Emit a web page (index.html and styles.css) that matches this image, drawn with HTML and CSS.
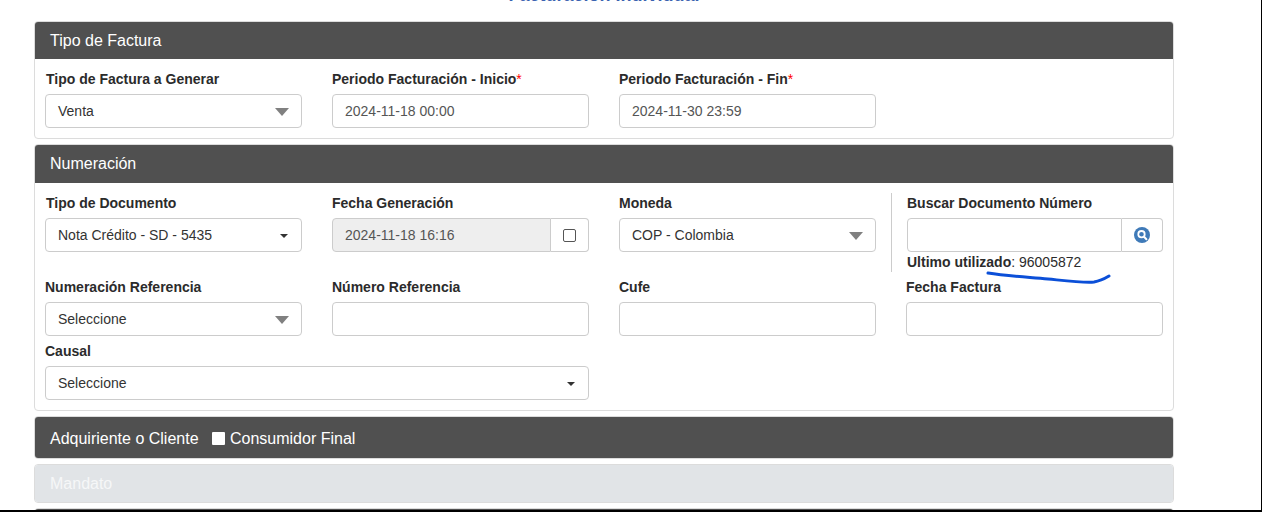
FILE: index.html
```html
<!DOCTYPE html>
<html lang="es">

<head>
    <meta charset="UTF-8">
    <meta name="viewport" content="width=device-width, initial-scale=1.0">
    <title>Facturación Individual</title>
    <link rel="stylesheet" href="styles.css">
</head>

<body>
    <div class="page">
        <h1 class="page-title">Facturación Individual</h1>

        <section class="card">
            <h2 class="card-head">Tipo de Factura</h2>
            <div class="card-body">
                <div class="field field-first">
                    <label>Tipo de Factura a Generar</label>
                    <div class="control select-fat">Venta</div>
                </div>
                <div class="field">
                    <label>Periodo Facturación - Inicio<span class="req">*</span></label>
                    <div class="control muted">2024-11-18 00:00</div>
                </div>
                <div class="field">
                    <label>Periodo Facturación - Fin<span class="req">*</span></label>
                    <div class="control muted">2024-11-30 23:59</div>
                </div>
            </div>
        </section>

        <section class="card">
            <h2 class="card-head head-tall">Numeración</h2>
            <div class="card-body numeracion">
                <div class="field field-first">
                    <label>Tipo de Documento</label>
                    <div class="control select-thin">Nota Crédito - SD - 5435</div>
                </div>
                <div class="field">
                    <label>Fecha Generación</label>
                    <div class="group">
                        <div class="control disabled">2024-11-18 16:16</div>
                        <div class="addon addon-check"><span class="check"></span></div>
                    </div>
                </div>
                <div class="field">
                    <label>Moneda</label>
                    <div class="control select-fat">COP - Colombia</div>
                </div>
                <div class="field field-search">
                    <label>Buscar Documento Número</label>
                    <div class="group">
                        <div class="control"></div>
                        <div class="addon addon-search">
                            <svg width="16" height="16" viewBox="0 0 16 16">
                                <circle cx="8" cy="8" r="8" fill="#3f7ab8" />
                                <circle cx="7.5" cy="7.2" r="3.2" fill="none" stroke="#fff" stroke-width="1.8" />
                                <path d="M10 9.8l2.4 2.4" stroke="#fff" stroke-width="2" stroke-linecap="round" />
                            </svg>
                        </div>
                    </div>
                    <p class="last-used"><strong>Ultimo utilizado</strong>: 96005872</p>
                    <svg class="scribble" width="126" height="16" viewBox="0 0 126 16">
                        <path d="M2 3C20 6 40 7 62 9C82 11 98 13 108 12C114 11 118 9 123 6" fill="none" stroke="#0b4fd8" stroke-width="3" stroke-linecap="round" />
                    </svg>
                </div>

                <div class="field">
                    <label>Numeración Referencia</label>
                    <div class="control select-fat">Seleccione</div>
                </div>
                <div class="field">
                    <label>Número Referencia</label>
                    <div class="control"></div>
                </div>
                <div class="field">
                    <label>Cufe</label>
                    <div class="control"></div>
                </div>
                <div class="field">
                    <label>Fecha Factura</label>
                    <div class="control"></div>
                </div>

                <div class="field field-wide">
                    <label>Causal</label>
                    <div class="control select-thin">Seleccione</div>
                </div>
            </div>
        </section>

        <section class="card">
            <h2 class="card-head head-closed">Adquiriente o Cliente <span class="final"><span class="box"></span>Consumidor Final</span></h2>
        </section>

        <section class="card">
            <h2 class="card-head head-disabled">Mandato</h2>
        </section>

        <section class="card">
            <h2 class="card-head head-closed"></h2>
        </section>
    </div>
</body>

</html>
```

FILE: styles.css
```css
* {
    box-sizing: border-box;
}

html,
body {
    height: 100%;
    overflow: hidden;
}

body {
    margin: 0;
    background: #fff;
    color: #212529;
    font-family: "Liberation Sans", Arial, sans-serif;
    font-size: 14px;
    border-right: 1px solid #000;
    border-bottom: 2px solid #000;
}

.page {
    height: 100%;
    overflow: hidden;
    padding-left: 34px;
}

.page-title {
    width: 1140px;
    height: 36px;
    margin: -15px 0 0;
    color: #3a62b0;
    font-size: 18px;
    line-height: 21px;
    text-align: center;
}

.card {
    width: 1140px;
    margin: 0 0 5px;
    border: 1px solid #dcdcdc;
    border-radius: 4px;
}

.card-head {
    height: 37px;
    margin: 0;
    padding: 0 15px;
    background: #505050;
    border-radius: 3px 3px 0 0;
    color: #fff;
    font-size: 16px;
    font-weight: normal;
    line-height: 38px;
}

.head-tall {
    height: 38px;
}

.head-closed {
    height: 41px;
    line-height: 43px;
    border-radius: 3px;
}

.head-disabled {
    background: #e1e4e7;
    border-radius: 3px;
    color: #f6f7f8;
    line-height: 37px;
}

.final {
    margin-left: 9px;
}

.box {
    display: inline-block;
    width: 13px;
    height: 13px;
    margin-right: 5px;
    background: #fff;
    border-radius: 1px;
    vertical-align: -1px;
}

.card-body {
    display: grid;
    grid-template-columns: 257px 257px 257px 257px;
    column-gap: 30px;
    padding: 10px;
}

.field {
    min-width: 0;
}

.field label {
    display: block;
    height: 25px;
    font-size: 14px;
    font-weight: bold;
    line-height: 20px;
    color: #2b2b2b;
}

.field-first label {
    padding-left: 1px;
}

.req {
    color: #f00;
    font-weight: normal;
}

.control {
    height: 34px;
    padding: 0 12px;
    border: 1px solid #ccc;
    border-radius: 4px;
    background: #fff;
    color: #333;
    font-size: 14px;
    line-height: 33px;
    position: relative;
}

.muted {
    color: #555;
}

.select-fat::after {
    content: "";
    position: absolute;
    right: 12px;
    top: 13px;
    border-left: 7px solid transparent;
    border-right: 7px solid transparent;
    border-top: 8px solid #808080;
}

.select-thin::after {
    content: "";
    position: absolute;
    right: 13px;
    top: 15px;
    border-left: 4px solid transparent;
    border-right: 4px solid transparent;
    border-top: 4px solid #333;
}

.group {
    display: flex;
}

.group .control {
    flex: 1;
    min-width: 0;
    border-radius: 4px 0 0 4px;
}

.disabled {
    background: #eee;
    color: #555;
}

.addon {
    display: flex;
    align-items: center;
    justify-content: center;
    height: 34px;
    border: 1px solid #ccc;
    border-left: 0;
    border-radius: 0 4px 4px 0;
}

.addon-check {
    width: 38px;
}

.addon-search {
    width: 41px;
}

.check {
    width: 13px;
    height: 13px;
    border: 1px solid #555;
    border-radius: 2px;
}

.numeracion .field:nth-child(-n+4) {
    height: 84px;
}

.numeracion .field:nth-child(n+5) {
    height: 64px;
}

.numeracion .field:nth-child(9) {
    height: 59px;
}

.field-search {
    position: relative;
    padding-left: 1px;
}

.field-search::before {
    content: "";
    position: absolute;
    left: -15px;
    top: 0;
    bottom: 5px;
    border-left: 1px solid #ccc;
}

.last-used {
    margin: 1px 0 0;
    font-size: 14px;
    line-height: 18px;
    color: #2b2b2b;
}

.scribble {
    position: absolute;
    left: 80px;
    top: 77px;
}

.field-wide {
    grid-column: 1 / span 2;
}
```
